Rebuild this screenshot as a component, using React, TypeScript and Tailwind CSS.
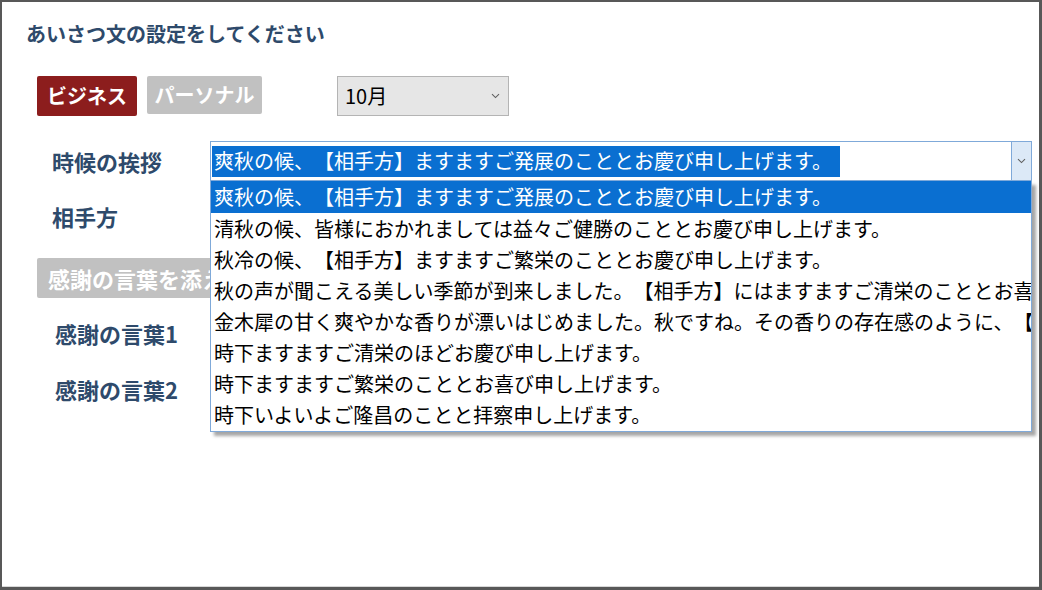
import React from 'react'

const greetings = [
  '爽秋の候、【相手方】ますますご発展のこととお慶び申し上げます。',
  '清秋の候、皆様におかれましては益々ご健勝のこととお慶び申し上げます。',
  '秋冷の候、【相手方】ますますご繁栄のこととお慶び申し上げます。',
  '秋の声が聞こえる美しい季節が到来しました。【相手方】にはますますご清栄のこととお喜び申し上げます。',
  '金木犀の甘く爽やかな香りが漂いはじめました。秋ですね。その香りの存在感のように、【相手方】もますますご活躍のことと存じます。',
  '時下ますますご清栄のほどお慶び申し上げます。',
  '時下ますますご繁栄のこととお喜び申し上げます。',
  '時下いよいよご隆昌のことと拝察申し上げます。'
]

const Chevron = ({ className }: { className?: string }) => (
  <svg className={className} width="9" height="6" viewBox="0 0 9 6" fill="none">
    <path d="M1 1.2 4.5 4.6 8 1.2" stroke="#606060" strokeWidth="1.1" />
  </svg>
)

const Label = ({ children, className }: { children: React.ReactNode; className?: string }) => (
  <span className={`text-[22px] font-bold leading-none text-[#2e4a6b] ${className ?? ''}`}>{children}</span>
)

export default function App() {
  return (
    <div
      className="h-[590px] w-[1042px] overflow-hidden border-t-2 border-l-2 border-r-[3px] border-b-[3px] border-[#585858] bg-white [text-spacing-trim:space-all]"
      style={{ fontFamily: '"Noto Sans CJK JP", "Noto Sans", sans-serif' }}
    >
      <div className="h-full border-b border-[#d8d8d8]">
        <h1 className="pl-[24px] pt-[20px] text-[20px] font-bold leading-[24px] text-[#2e4a6b]">
          あいさつ文の設定をしてください
        </h1>

        <div className="mt-[30px] flex items-center pl-[35px]">
          <div className="flex h-[40px] w-[100px] items-center justify-center rounded-[2px] bg-[#8c1d1d] text-[20px] font-bold text-white">
            ビジネス
          </div>
          <div className="ml-[10px] flex h-[38px] w-[115px] items-center justify-center self-start rounded-[2px] bg-[#c1c1c1] text-[20px] font-bold text-white">
            パーソナル
          </div>
          <div className="ml-[75px] flex h-[40px] w-[172px] items-center justify-between border border-[#b4b4b4] bg-[#e6e6e6] pl-[7px] pr-[8px]">
            <span className="text-[20px] leading-none text-black">10月</span>
            <Chevron />
          </div>
        </div>

        <div className="mt-[25px] flex items-center">
          <Label className="ml-[50px] w-[158px]">時候の挨拶</Label>
          <div className="relative h-[40px] w-[822px]">
            <div className="flex h-full items-center border border-[#7fa9d9] bg-white pl-[1px]">
              <span className="flex h-[31px] items-center whitespace-nowrap bg-[#0a6fd1] pl-[2px] pr-[8px] text-[20px] leading-none text-white">
                {greetings[0]}
              </span>
              <div className="ml-auto flex h-full w-[20px] items-center justify-center border-l border-[#7fa9d9] bg-[#dce9f7]">
                <Chevron />
              </div>
            </div>
            <ul className="absolute left-0 top-full z-10 h-[251px] w-full overflow-hidden border border-t-0 border-[#7fa9d9] bg-white shadow-[4px_4px_3px_rgba(0,0,0,0.35)]">
              {greetings.map((g, i) => (
                <li
                  key={i}
                  className={`flex items-center whitespace-nowrap pl-[3px] text-[20px] leading-none ${
                    i === 0 ? 'h-[32px] bg-[#0a6fd1] text-white' : 'h-[31px] text-black'
                  }`}
                >
                  {g}
                </li>
              ))}
            </ul>
          </div>
        </div>

        <div className="mt-[24px] pl-[50px]">
          <Label>相手方</Label>
        </div>

        <div className="ml-[35px] mt-[27px] flex h-[40px] w-[400px] items-center rounded-[2px] bg-[#c1c1c1] pl-[11px] text-[22px] font-bold text-white">
          感謝の言葉を添える
        </div>

        <div className="mt-[24px] flex flex-col gap-[34px] pl-[53px]">
          <Label>感謝の言葉1</Label>
          <Label>感謝の言葉2</Label>
        </div>
      </div>
    </div>
  )
}
